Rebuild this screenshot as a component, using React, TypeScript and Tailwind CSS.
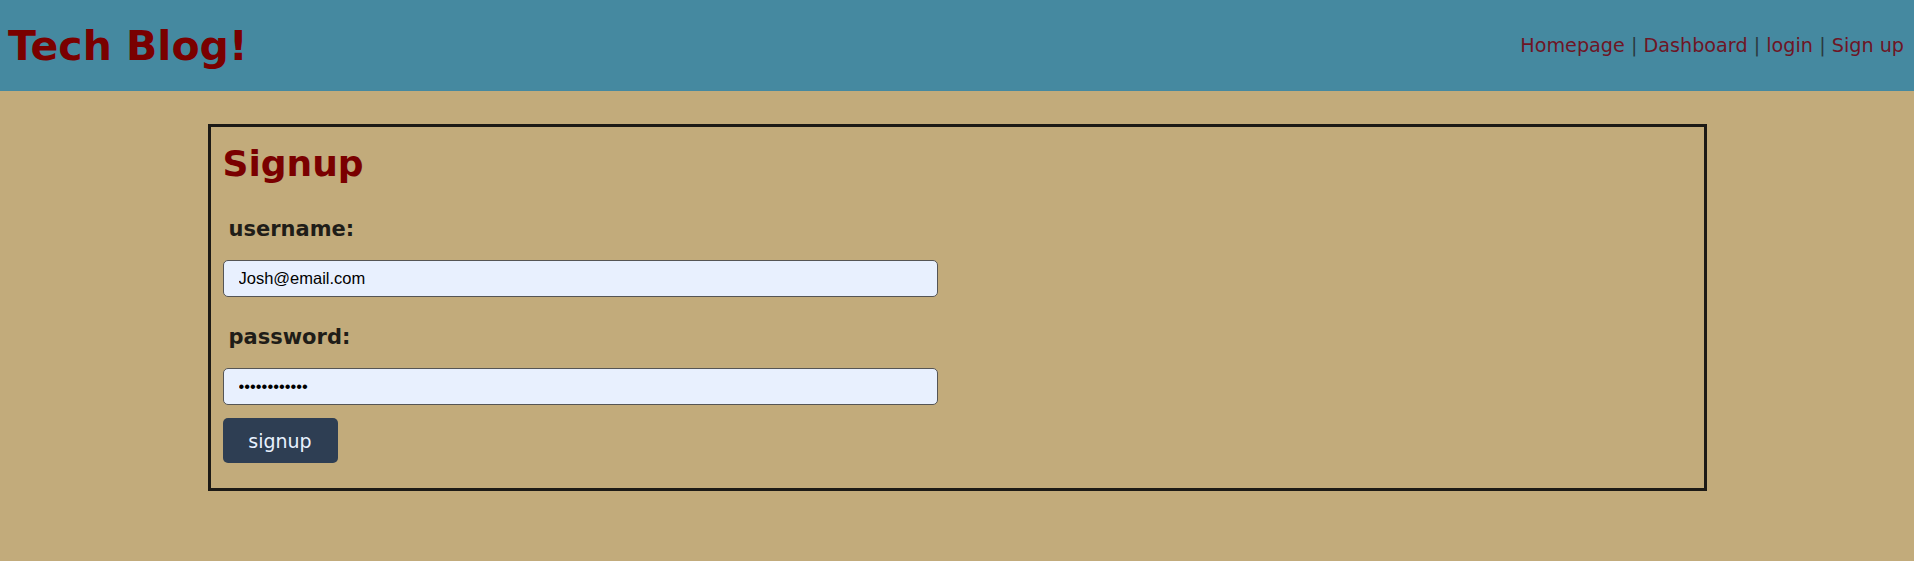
import React from "react";

const Separator = () => <span className="text-[#2b3a40]"> | </span>;

export default function App() {
  return (
    <div className="min-h-[561px] bg-[#c2ab7b] font-['DejaVu_Sans',sans-serif] leading-[normal]">
      <header className="flex h-[91px] items-center justify-between bg-[#4589a0] pl-[8px] pr-[10px]">
        <h1 className="text-[41px] leading-[normal] font-bold text-[#7a0000]">Tech Blog!</h1>
        <nav className="text-[19.2px] leading-[normal] text-[#6e1525]">
          <a href="#">Homepage</a>
          <Separator />
          <a href="#">Dashboard</a>
          <Separator />
          <a href="#">login</a>
          <Separator />
          <a href="#">Sign up</a>
        </nav>
      </header>

      <main className="pt-[33px]">
        <section className="mx-auto w-[1499px] border-[3px] border-[#1c1a16] px-[12px] pt-[16px] pb-[25px]">
          <h2 className="text-[36px] leading-[normal] font-bold text-[#7a0000]">Signup</h2>
          <form className="flex flex-col" onSubmit={(e) => e.preventDefault()}>
            <label className="mt-[33px] pl-[6px] text-[21px] leading-[normal] font-bold text-[#1f1d18]" htmlFor="username">
              username:
            </label>
            <input
              id="username"
              type="text"
              defaultValue="Josh@email.com"
              className="mt-[19px] h-[37px] w-[715px] rounded-[5px] border border-[#555555] bg-[#e8f0fe] px-[15px] font-['Liberation_Sans',Arial,sans-serif] text-[16.5px] text-black outline-none"
            />
            <label className="mt-[28px] pl-[6px] text-[21px] leading-[normal] font-bold text-[#1f1d18]" htmlFor="password">
              password:
            </label>
            <input
              id="password"
              type="password"
              defaultValue="password1234"
              className="mt-[19px] h-[37px] w-[715px] rounded-[5px] border border-[#555555] bg-[#e8f0fe] px-[15px] font-['Liberation_Sans',Arial,sans-serif] text-[16.5px] text-black outline-none"
            />
            <button
              type="submit"
              className="mt-[13px] h-[45px] w-[115px] rounded-[5px] bg-[#2e3e53] text-[19px] leading-[normal] text-[#e8f1ff]"
            >
              signup
            </button>
          </form>
        </section>
      </main>
    </div>
  );
}
